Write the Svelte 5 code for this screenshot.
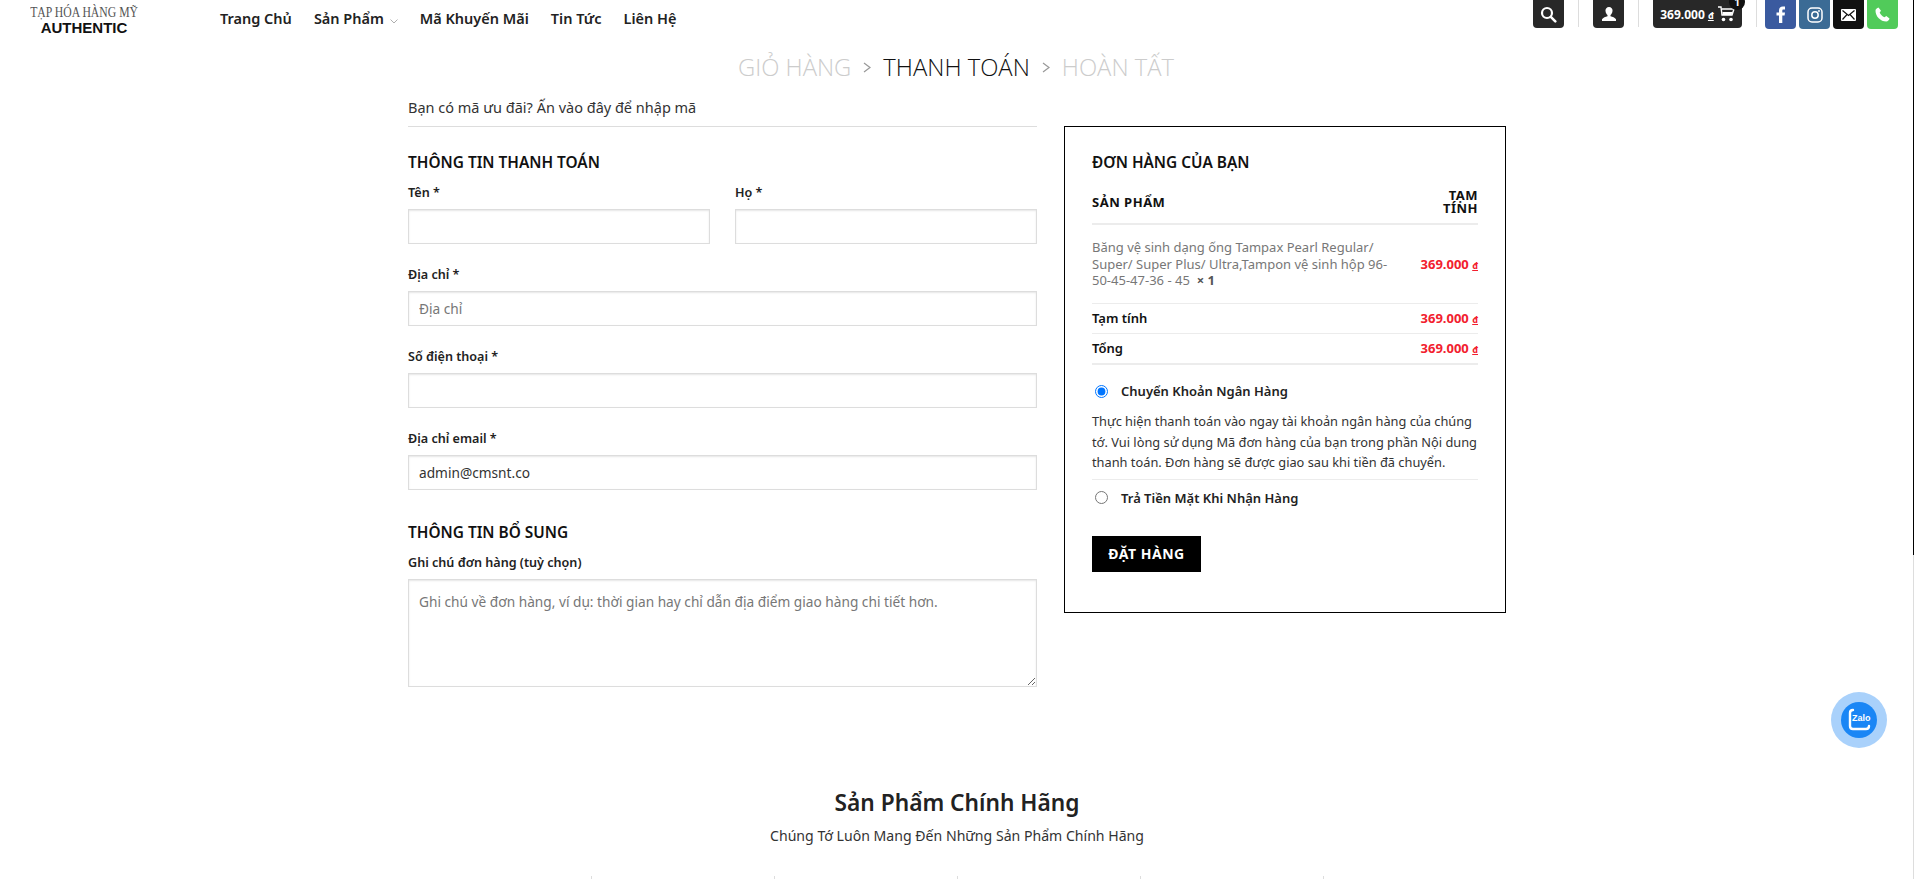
<script lang="ts">
	const navItems = [
		{ label: 'Trang Chủ' },
		{ label: 'Sản Phẩm', caret: true },
		{ label: 'Mã Khuyến Mãi' },
		{ label: 'Tin Tức' },
		{ label: 'Liên Hệ' }
	];

	const price = '369.000';
	let payment = $state('bank');
</script>

<div class="page">
	<header class="top">
		<div class="logo">
			<span class="logo-top">TẠP HÓA HÀNG MỸ</span>
			<span class="logo-bottom">AUTHENTIC</span>
		</div>
		<nav class="nav">
			{#each navItems as item}
				<a href="#top">
					{item.label}
					{#if item.caret}
						<svg class="caret" width="8" height="5" viewBox="0 0 8 5"><path d="M.5.5 4 4 7.500.5" fill="none" stroke="#999" stroke-width=".8" /></svg>
					{/if}
				</a>
			{/each}
		</nav>
		<div class="tools">
			<button class="tool" aria-label="Tìm kiếm">
				<svg width="17" height="17" viewBox="0 0 17 17"><circle cx="7" cy="7" r="5" fill="none" stroke="#fff" stroke-width="2.200" /><path d="m10.800 10.800 4.500 4.500" stroke="#fff" stroke-width="2.600" stroke-linecap="round" /></svg>
			</button>
			<span class="divider"></span>
			<button class="tool" aria-label="Tài khoản">
				<svg width="14" height="14" viewBox="0 0 14 14"><path d="M7 0a3.500 3.500 0 0 1 3.500 4c-.2 2-1.200 3.500-2 4v1.300c2 .5 4.500 1.300 5.500 3V14H0v-1.700c1-1.700 3.500-2.500 5.500-3V8c-.8-.5-1.800-2-2-4A3.500 3.500 0 0 1 7 0Z" fill="#fff" /></svg>
			</button>
			<span class="divider"></span>
			<button class="tool cart">
				<span>{price} <u class="dong">đ</u></span>
				<svg width="17" height="16" viewBox="0 0 17 16"><path d="M0 1h3l1 8h10l2-6H4" fill="none" stroke="#fff" stroke-width="1.400" /><path d="M4.500 6h10l-1 3h-9Z" fill="#fff" /><circle cx="5.500" cy="13.500" r="1.800" fill="#fff" /><circle cx="13" cy="13.500" r="1.800" fill="#fff" /></svg>
				<span class="badge">1</span>
			</button>
			<span class="divider last"></span>
			<div class="socials">
				<span class="social fb"><svg width="10" height="17" viewBox="0 0 10 17"><path d="M3 17V9.500H.5V6.500H3V4.500C3 1.800 4.500.5 6.800.5H9v3H7.500C6.600 3.500 6.300 4 6.300 4.800v1.700H9l-.4 3H6.300V17Z" fill="#fff" /></svg></span>
				<span class="social ig"><svg width="16" height="16" viewBox="0 0 16 16"><rect x="1" y="1" width="14" height="14" rx="4" fill="none" stroke="#fff" stroke-width="1.500" /><circle cx="8" cy="8" r="3.200" fill="none" stroke="#fff" stroke-width="1.500" /><circle cx="12" cy="4" r=".9" fill="#fff" /></svg></span>
				<span class="social mail"><svg width="15" height="12" viewBox="0 0 15 12"><rect width="15" height="12" rx="1" fill="#fff" /><path d="m1.500 1.500 6 5 6-5M1.500 10.500l4.500-5M13.500 10.500 9 5.500" fill="none" stroke="#111" stroke-width="1.200" /></svg></span>
				<span class="social phone"><svg width="15" height="15" viewBox="0 0 15 15"><path d="M3.500.5 6 3.700 4.700 5.500c.8 2 2.600 3.900 4.800 4.800l1.800-1.300 3.200 2.500c-.4 1.600-1.700 3-3.200 3C5.500 14.500.5 9.300.5 3.700.5 2.200 2 .9 3.500.5Z" fill="#fff" /></svg></span>
			</div>
		</div>
	</header>

	<nav class="steps">
		<span class="muted">GIỎ HÀNG</span>
		<svg class="chev" width="8" height="11" viewBox="0 0 8 11"><path d="m1 1 6 4.500L1 10" fill="none" stroke="#999" stroke-width="1.200" /></svg>
		<span>THANH TOÁN</span>
		<svg class="chev" width="8" height="11" viewBox="0 0 8 11"><path d="m1 1 6 4.500L1 10" fill="none" stroke="#999" stroke-width="1.200" /></svg>
		<span class="muted">HOÀN TẤT</span>
	</nav>

	<main class="checkout">
		<section class="billing">
			<p class="coupon">Bạn có mã ưu đãi? Ấn vào đây để nhập mã</p>

			<h3>THÔNG TIN THANH TOÁN</h3>
			<div class="two">
				<div class="field">
					<label for="first">Tên *</label>
					<input id="first" />
				</div>
				<div class="field">
					<label for="last">Họ *</label>
					<input id="last" />
				</div>
			</div>
			<div class="field spaced">
				<label for="addr">Địa chỉ *</label>
				<input id="addr" placeholder="Địa chỉ" />
			</div>
			<div class="field spaced">
				<label for="phone">Số điện thoại *</label>
				<input id="phone" />
			</div>
			<div class="field spaced">
				<label for="email">Địa chỉ email *</label>
				<input id="email" value="admin@cmsnt.co" />
			</div>

			<h3 class="extra">THÔNG TIN BỔ SUNG</h3>
			<div class="field">
				<label for="note">Ghi chú đơn hàng (tuỳ chọn)</label>
				<textarea id="note" placeholder="Ghi chú về đơn hàng, ví dụ: thời gian hay chỉ dẫn địa điểm giao hàng chi tiết hơn."></textarea>
			</div>
		</section>

		<aside class="order">
			<h3>ĐƠN HÀNG CỦA BẠN</h3>
			<div class="row head">
				<span>SẢN PHẨM</span>
				<span class="sub-label">TẠM TÍNH</span>
			</div>
			<div class="row item">
				<span class="name">Băng vệ sinh dạng ống Tampax Pearl Regular/ Super/ Super Plus/ Ultra,Tampon vệ sinh hộp 96-50-45-47-36 - 45 &nbsp;<b>× 1</b></span>
				<span class="price">{price} <u class="dong">đ</u></span>
			</div>
			<div class="row total">
				<span>Tạm tính</span>
				<span class="price">{price} <u class="dong">đ</u></span>
			</div>
			<div class="row total grand">
				<span>Tổng</span>
				<span class="price">{price} <u class="dong">đ</u></span>
			</div>

			<label class="pay first">
				<input type="radio" name="pay" value="bank" bind:group={payment} />
				<span>Chuyển Khoản Ngân Hàng</span>
			</label>
			<p class="pay-note">Thực hiện thanh toán vào ngay tài khoản ngân hàng của chúng tớ. Vui lòng sử dụng Mã đơn hàng của bạn trong phần Nội dung thanh toán. Đơn hàng sẽ được giao sau khi tiền đã chuyển.</p>
			<label class="pay">
				<input type="radio" name="pay" value="cod" bind:group={payment} />
				<span>Trả Tiền Mặt Khi Nhận Hàng</span>
			</label>

			<button class="place">ĐẶT HÀNG</button>
		</aside>
	</main>

	<section class="promo">
		<h2>Sản Phẩm Chính Hãng</h2>
		<p>Chúng Tớ Luôn Mang Đến Những Sản Phẩm Chính Hãng</p>
		<div class="ticks">
			{#each [0, 1, 2, 3, 4] as t (t)}
				<span></span>
			{/each}
		</div>
	</section>

	<div class="zalo">
		<div class="zalo-inner">
			<svg width="26" height="26" viewBox="0 0 26 26"><path d="M7 3C5 3 4 4 4 6v13c0 2 1 3 3 3h13c2 0 3-1 3-3" fill="none" stroke="#fff" stroke-width="2.400" stroke-linecap="round" /></svg>
			<span>Zalo</span>
		</div>
	</div>

	<span class="edge"></span>
</div>

<style>
	:global(body) {
		margin: 0;
		background: #fff;
	}

	.page {
		position: relative;
		height: 879px;
		overflow: hidden;
		font-family: 'Noto Sans', sans-serif;
		color: #111;
	}

	.edge {
		position: absolute;
		top: 0;
		right: 0;
		width: 1px;
		height: 879px;
		background: linear-gradient(#000 555px, #ddd 555px);
	}

	/* ── Header ────────────────────────────── */

	.top {
		display: flex;
		align-items: flex-start;
		height: 36px;
		padding-left: 31px;
	}

	.logo {
		display: flex;
		flex-direction: column;
		align-items: center;
		width: 106px;
		margin-top: 5px;
	}

	.logo-top {
		font-family: 'Liberation Serif', serif;
		font-size: 15px;
		line-height: 15px;
		color: #555;
		white-space: nowrap;
		transform: scaleX(.78);
	}

	.logo-bottom {
		font-family: 'Liberation Sans', sans-serif;
		font-size: 15px;
		font-weight: 700;
		line-height: 15px;
	}

	.nav {
		display: flex;
		gap: 22px;
		margin-left: 83px;
		margin-top: 8px;
	}

	.nav a {
		color: #222;
		font-size: 14.500px;
		font-weight: 600;
		line-height: 20px;
		text-decoration: none;
		white-space: nowrap;
	}

	.caret {
		vertical-align: 0;
		margin-left: 2px;
	}

	.tools {
		display: flex;
		align-items: flex-start;
		margin-left: auto;
		margin-right: 16px;
	}

	.tool {
		position: relative;
		display: flex;
		align-items: center;
		justify-content: center;
		width: 31px;
		height: 28px;
		padding: 0;
		border: 0;
		border-radius: 0 0 4px 4px;
		background: #282828;
		color: #fff;
		font-family: inherit;
	}

	.cart {
		gap: 4px;
		width: 89px;
		font-size: 12px;
		font-weight: 700;
	}

	.dong {
		font-size: 9px;
	}

	.badge {
		position: absolute;
		top: -6px;
		right: -3px;
		width: 16px;
		height: 16px;
		border-radius: 50%;
		background: #111;
		font-size: 10px;
		line-height: 17px;
		text-align: center;
	}

	.divider {
		width: 1px;
		height: 27px;
		margin: 0 14px;
		background: #ddd;
	}

	.divider.last {
		margin: 0 8px 0 14px;
	}

	.socials {
		display: flex;
		gap: 3px;
	}

	.social {
		display: flex;
		align-items: center;
		justify-content: center;
		width: 31px;
		height: 29px;
		border-radius: 0 0 4px 4px;
	}

	.fb { background: #3a5a9f; }
	.ig { background: #3b6b95; }
	.mail { background: #111; }
	.phone { background: #51cb5a; }

	/* ── Steps ─────────────────────────────── */

	.steps {
		display: flex;
		justify-content: center;
		align-items: center;
		gap: 12px;
		height: 58px;
		padding-top: 2px;
		padding-right: 2px;
		font-family: 'Open Sans', sans-serif;
		font-size: 23.800px;
		font-weight: 300;
		color: #111;
	}

	.muted {
		color: #ccc;
	}

	/* ── Checkout ──────────────────────────── */

	.checkout {
		display: flex;
		align-items: flex-start;
		gap: 27px;
		width: 1098px;
		margin: 0 auto;
	}

	.billing {
		width: 629px;
		flex: none;
	}

	.coupon {
		margin: 0;
		padding: 1px 0 9px;
		font-size: 14.500px;
		line-height: 20px;
		color: #333;
		border-bottom: 1px solid #ddd;
	}

	h3 {
		margin: 0;
		font-size: 15.400px;
		font-weight: 600;
		line-height: 20px;
		color: #111;
	}

	.billing h3 {
		margin-top: 26px;
		line-height: 19px;
	}

	.billing h3.extra {
		margin-top: 33px;
	}

	.two {
		display: grid;
		grid-template-columns: 1fr 1fr;
		gap: 25px;
	}

	.field {
		margin-top: 11px;
	}

	.field.spaced {
		margin-top: 21px;
	}

	label {
		display: block;
		font-size: 12.600px;
		font-weight: 600;
		line-height: 20px;
		color: #222;
	}

	input:not([type='radio']),
	textarea {
		display: block;
		box-sizing: border-box;
		width: 100%;
		height: 35px;
		margin-top: 6px;
		padding: 0 10px;
		border: 1px solid #ddd;
		border-radius: 0;
		box-shadow: inset 0 1px 2px rgba(0, 0, 0, 0.1);
		font-family: inherit;
		font-size: 13.700px;
		color: #333;
		background: #fff;
	}

	::placeholder {
		color: #777;
		opacity: 1;
	}

	textarea {
		height: 108px;
		padding-top: 12px;
		line-height: 20px;
		resize: vertical;
	}

	/* ── Order card ────────────────────────── */

	.order {
		box-sizing: border-box;
		width: 442px;
		height: 487px;
		margin-top: 30px;
		padding: 26px 27px;
		border: 1px solid #000;
	}

	.row {
		display: flex;
		justify-content: space-between;
		align-items: center;
		gap: 30px;
		border-bottom: 1px solid #ececec;
		font-size: 13px;
	}

	.head {
		height: 42px;
		margin-top: 8px;
		border-bottom-width: 2px;
		font-size: 13px;
		font-weight: 700;
		line-height: 13px;
		letter-spacing: .5px;
	}

	.sub-label {
		width: 40px;
		text-align: right;
	}

	.item {
		height: 77.500px;
	}

	.name {
		color: #777;
		line-height: 16.500px;
	}

	.name b {
		color: #555;
	}

	.price {
		flex: none;
		color: #f2202e;
		font-weight: 700;
	}

	.total {
		height: 29px;
		font-weight: 600;
	}

	.total.grand {
		height: 29.500px;
		border-bottom-width: 2px;
	}

	.pay {
		display: flex;
		align-items: center;
		gap: 13px;
		height: 20px;
		padding-left: 3px;
		font-size: 13px;
		font-weight: 600;
	}

	.pay input {
		width: 13px;
		height: 13px;
		margin: 0;
	}

	.pay.first {
		margin-top: 16px;
	}

	.pay-note {
		margin: 10px 0 0;
		padding-bottom: 6px;
		border-bottom: 1px solid #ececec;
		font-size: 12.800px;
		line-height: 20.500px;
		color: #333;
	}

	.pay-note + .pay {
		margin-top: 8px;
	}

	.place {
		display: block;
		width: 109px;
		height: 36px;
		margin-top: 28px;
		padding: 0;
		border: 0;
		background: #000;
		color: #fff;
		font-family: inherit;
		font-size: 14px;
		font-weight: 700;
		letter-spacing: .5px;
	}

	/* ── Promo ─────────────────────────────── */

	.promo {
		margin-top: 101px;
		text-align: center;
	}

	.promo h2 {
		margin: 0;
		font-size: 22.700px;
		font-weight: 600;
		line-height: 30px;
		color: #222;
	}

	.promo p {
		margin: 8px 0 0;
		font-size: 14.100px;
		line-height: 20px;
		color: #333;
	}

	.ticks {
		display: flex;
		justify-content: center;
		gap: 182px;
		margin-top: 30px;
	}

	.ticks span {
		width: 1px;
		height: 20px;
		background: #ddd;
	}

	/* ── Zalo ──────────────────────────────── */

	.zalo {
		position: absolute;
		left: 1831px;
		top: 692px;
		display: flex;
		align-items: center;
		justify-content: center;
		width: 56px;
		height: 56px;
		border-radius: 50%;
		background: #a9d1fb;
	}

	.zalo-inner {
		position: relative;
		width: 36px;
		height: 36px;
		border-radius: 50%;
		background: #1a86f5;
	}

	.zalo-inner svg {
		position: absolute;
		left: 5px;
		top: 5px;
	}

	.zalo-inner span {
		position: absolute;
		left: 11px;
		top: 11px;
		font-family: 'Liberation Sans', sans-serif;
		font-size: 9px;
		font-weight: 700;
		color: #fff;
	}
</style>
